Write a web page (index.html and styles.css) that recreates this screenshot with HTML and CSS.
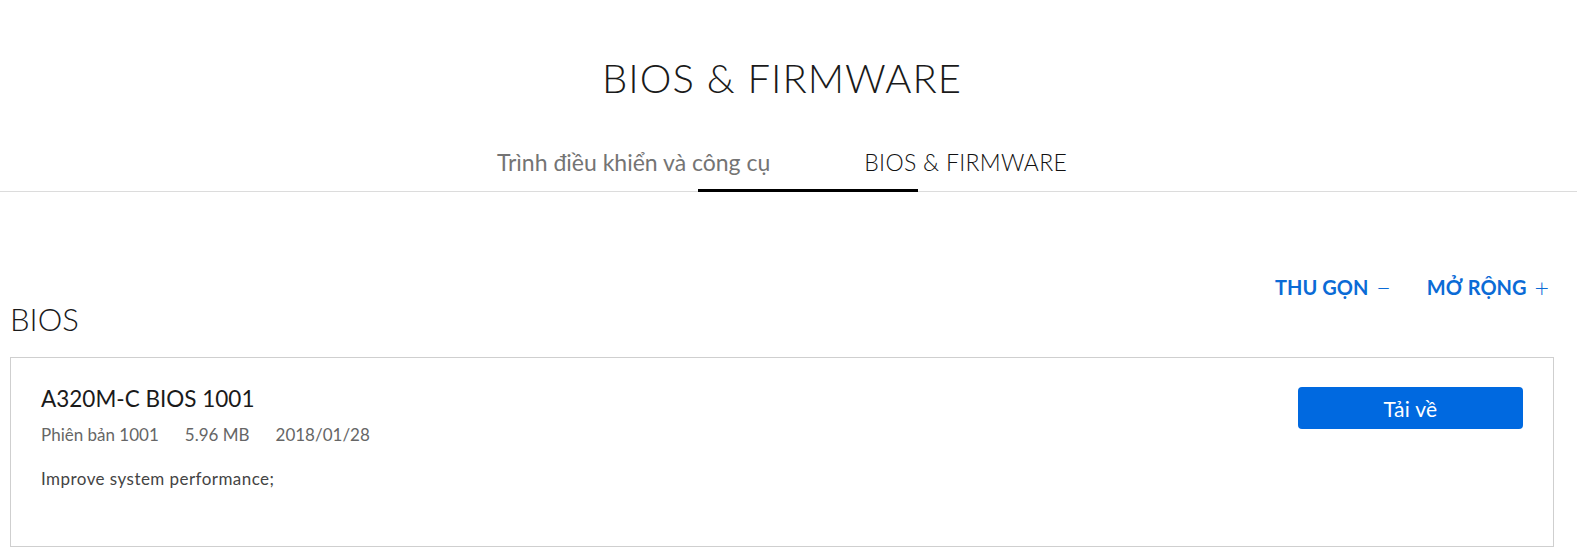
FILE: index.html
```html
<!DOCTYPE html>
<html lang="vi">
<head>
<meta charset="utf-8">
<title>BIOS & FIRMWARE</title>
<link rel="stylesheet" href="styles.css">
</head>
<body>
<header class="page-head">
  <h1 class="page-title">BIOS &amp; FIRMWARE</h1>
  <nav class="tabs">
    <a class="tab">Trình điều khiển và công cụ</a>
    <a class="tab tab-active">BIOS &amp; FIRMWARE</a>
    <span class="tab-indicator"></span>
  </nav>
</header>
<main class="content">
  <div class="toggles">
    <button class="toggle">THU GỌN <span class="toggle-sign">−</span></button>
    <button class="toggle">MỞ RỘNG <span class="toggle-sign">+</span></button>
  </div>
  <h2 class="section-title">BIOS</h2>
  <article class="card">
    <div class="card-info">
      <h3 class="card-title">A320M-C BIOS 1001</h3>
      <div class="meta">
        <span>Phiên bản 1001</span>
        <span>5.96 MB</span>
        <span>2018/01/28</span>
      </div>
      <p class="desc">Improve system performance;</p>
    </div>
    <a class="download">Tải về</a>
  </article>
</main>
</body>
</html>
```

FILE: styles.css
```css
* { box-sizing: border-box; }
body {
  margin: 0;
  background: #fff;
  font-family: Lato, "Open Sans", sans-serif;
  color: #1a1a1a;
}
.page-head {
  border-bottom: 1px solid #dcdcdc;
  position: relative;
}
.page-title {
  margin: 54px 13px 0 0;
  text-align: center;
  font-size: 40px;
  line-height: 48px;
  font-weight: 300;
  letter-spacing: 1px;
  color: #1a1a1a;
}
.tabs {
  display: flex;
  justify-content: center;
  gap: 94px;
  margin: 47px 13px 0 0;
  padding-bottom: 16px;
}
.tab {
  font-size: 23px;
  line-height: 26px;
  font-weight: 400;
  color: #747474;
  cursor: pointer;
}
.tab-active { color: #111; font-weight: 300; letter-spacing: 0.3px; }
.tab-indicator {
  position: absolute;
  left: 698px;
  width: 220px;
  bottom: -1px;
  height: 3px;
  background: #000;
}
.content {
  margin: 0 23px 0 10px;
}
.toggles {
  display: flex;
  justify-content: flex-end;
  gap: 36px;
  padding-top: 83px;
  padding-right: 5px;
}
.toggle {
  border: 0;
  background: none;
  padding: 0;
  font-family: inherit;
  font-size: 20px;
  line-height: 24px;
  font-weight: 700;
  color: #0b6bd6;
  cursor: pointer;
  display: flex;
  align-items: center;
}
.toggle-sign {
  margin-left: 8px;
  font-weight: 300;
  font-size: 25px;
  line-height: 24px;
}
.section-title {
  margin: 2px 0 20px 0;
  font-size: 31px;
  line-height: 36px;
  font-weight: 300;
  color: #1a1a1a;
}
.card {
  display: flex;
  justify-content: space-between;
  align-items: flex-start;
  border: 1px solid #cfcfcf;
  padding: 29px 30px 50px 30px;
  min-height: 190px;
}
.card-title {
  margin: 0;
  font-size: 22.5px;
  line-height: 24px;
  font-weight: 400;
  color: #1a1a1a;
}
.meta {
  display: flex;
  gap: 26px;
  margin-top: 14px;
  font-size: 17px;
  line-height: 20px;
  color: #666;
}
.desc {
  margin: 24px 0 0 0;
  font-size: 17px;
  line-height: 20px;
  letter-spacing: 0.45px;
  color: #444;
}
.download {
  width: 225px;
  height: 42px;
  border-radius: 4px;
  background: #0069e0;
  color: #fff;
  font-size: 21px;
  letter-spacing: 0.3px;
  display: flex;
  align-items: center;
  justify-content: center;
  cursor: pointer;
}
```
